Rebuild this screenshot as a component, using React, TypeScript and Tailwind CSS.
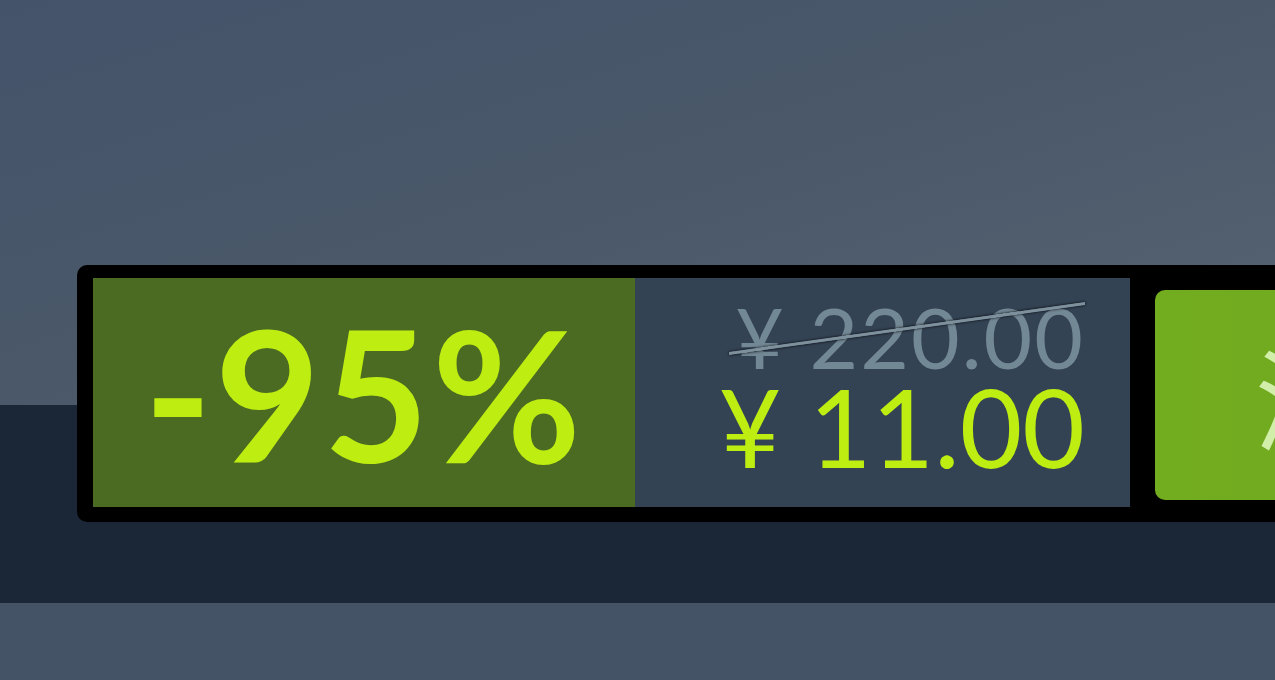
import React from 'react';

const Price = () => (
  <div className="flex w-[495px] shrink-0 flex-col items-end justify-center whitespace-nowrap bg-[#344354] pb-[10px] pr-[45px]">
    <div className="relative h-[80px] text-[84px] leading-[80px] tracking-[2px] text-[#738895]">
      ¥ 220.00
      {/* slanted strike line */}
      <span className="absolute -left-[6px] right-0 top-[30px] -skew-y-[8deg] border-b-[3px] border-[#7d909c] shadow-[0_0_3px_#000]" />
    </div>
    <div className="-mt-[3px] h-[104px] text-[108px] leading-[104px] text-[#beee11]">¥ 11.00</div>
  </div>
);

export default function App() {
  return (
    <div className="flex h-[680px] w-[1275px] flex-col overflow-hidden font-['Lato',sans-serif]">
      <div className="h-[405px] shrink-0 bg-gradient-to-br from-[#44536a] via-[#4a5869] to-[#576473]" />
      <div className="h-[198px] shrink-0 bg-[#1b2637]">
        <div className="relative -mt-[140px] ml-[77px] flex h-[257px] w-[1500px] rounded-l-[10px] bg-black pb-[15px] pl-[16px] pt-[13px]">
          <div className="flex w-[542px] shrink-0 items-center justify-center bg-[#4c6b22]">
            <span className="whitespace-nowrap text-[182px] font-bold leading-none tracking-[3px] text-[#beee11]">-95%</span>
          </div>
          <Price />
          <div className="ml-[25px] mt-[12px] flex h-[210px] w-[900px] shrink-0 items-center whitespace-nowrap rounded-l-[10px] bg-gradient-to-r from-[#72ac1f] to-[#6ea31e] pl-[100px] font-['Noto_Sans_CJK_SC',sans-serif] text-[110px] text-[#d2efa9]">
            添加至购物车
          </div>
        </div>
      </div>
      <div className="flex-1 bg-[#445366]" />
    </div>
  );
}
